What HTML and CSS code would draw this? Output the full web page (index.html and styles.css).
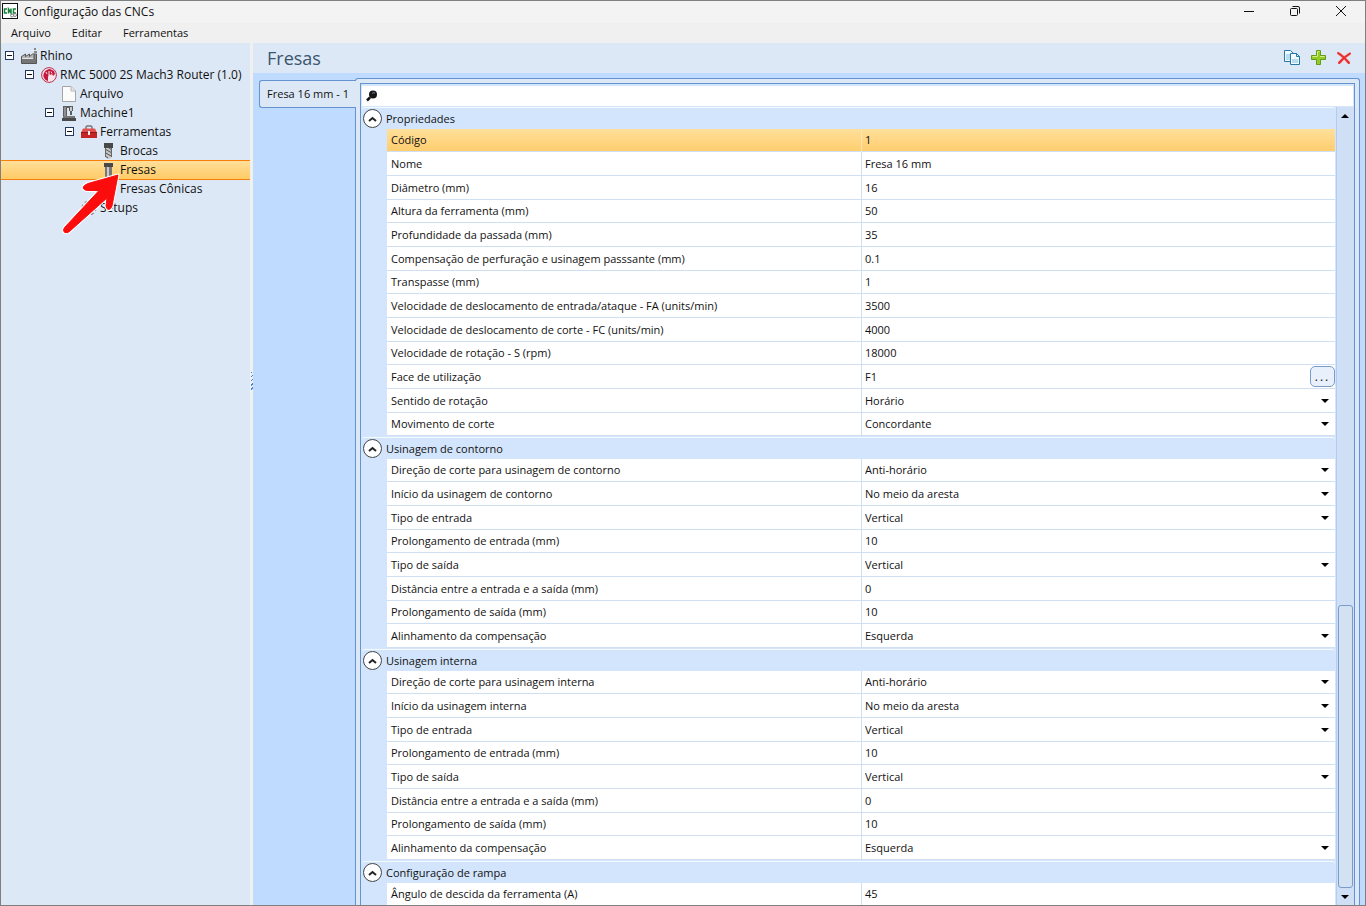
FILE: index.html
```html
<!DOCTYPE html>
<html lang="pt-BR">
	<head>
		<meta charset="UTF-8" />
		<meta name="viewport" content="width=device-width, initial-scale=1.0" />
		<title>Configuração das CNCs</title>
		<link rel="stylesheet" href="styles.css">
	</head>
	<body>
		<div class="window">
			<header class="titlebar">
				<svg class="app-icon" width="16" height="16" viewBox="0 0 16 16">
					<rect x="0.5" y="0.5" width="15" height="15" fill="#fff" stroke="#111" />
					<path d="M5 6H2.500v4H5M6.500 10.500V6l2.500 4V5.500M14 6h-2.500v4H14" fill="none" stroke="#15803a" stroke-width="1.500" />
					<circle cx="10" cy="12.500" r="1.500" fill="none" stroke="#888" />
					<circle cx="13" cy="12" r="1.500" fill="none" stroke="#888" />
				</svg>
				<h1 class="window-title">Configuração das CNCs</h1>
				<div class="window-buttons">
					<button type="button" aria-label="Minimizar">
						<svg width="12" height="12" viewBox="0 0 12 12"><path d="M1 6.500h10" /></svg>
					</button>
					<button type="button" aria-label="Restaurar">
						<svg width="12" height="12" viewBox="0 0 12 12">
							<rect x="1.500" y="3.500" width="7" height="7" rx="1" />
							<path d="M3.500 1.500H9a1.500 1.500 0 0 1 1.500 1.500v5.500" />
						</svg>
					</button>
					<button type="button" aria-label="Fechar">
						<svg width="12" height="12" viewBox="0 0 12 12"><path d="M1 1l10 10M11 1L1 11" /></svg>
					</button>
				</div>
			</header>

			<nav class="menubar">
				<button type="button">Arquivo</button>
				<button type="button">Editar</button>
				<button type="button">Ferramentas</button>
			</nav>

			<div class="workspace">
				<aside class="sidebar">
					<ul class="tree">
						<li class="node">
							<button type="button" class="expander" aria-label="Recolher Rhino"></button>
							<svg class="icon" viewBox="0 0 16 16">
								<path d="M13 0h2v2h-2zM13 3h3v2h-3z" fill="#888" />
								<path d="M0.500 15.500V8.500l4-2.500v2.500l4-2.500v2.500l3-2.500h4v9.500z" fill="#b5b5b5" stroke="#555" />
								<path d="M1 11h14v4H1z" fill="#757575" />
								<path d="M13.500 6v5" stroke="#666" stroke-width="2" />
								<path d="M1 10.500h11" stroke="#e4e4e4" />
							</svg>
							<span>Rhino</span>
						</li>
						<li class="node level-1">
							<button type="button" class="expander" aria-label="Recolher RMC 5000"></button>
							<svg class="icon" viewBox="0 0 16 16">
								<circle cx="8" cy="8" r="7.400" fill="#f6e4ea" stroke="#b8304f" />
								<path d="M7 14C3 13 1.500 9 3 6 4.500 3 7 2 9 2l4 2 1 3-2 2-1-2-2 1-1-1-1 3z" fill="#c4183c" />
								<path d="M8 4v4M10 4.500l1 2M5 5l1 2" stroke="#f6e4ea" />
							</svg>
							<span>RMC 5000 2S Mach3 Router (1.0)</span>
						</li>
						<li class="node level-2 leaf">
							<svg class="icon" viewBox="0 0 16 16">
								<path d="M1.500 0.500H10L14.500 5v10.500h-13z" fill="#fbfbfb" stroke="#a5a5a5" />
								<path d="M10 0.500V5h4.500" fill="#e8e8e8" stroke="#b5b5b5" />
							</svg>
							<span>Arquivo</span>
						</li>
						<li class="node level-2">
							<button type="button" class="expander" aria-label="Recolher Machine1"></button>
							<svg class="icon" viewBox="0 0 16 16">
								<path d="M2 12V1h10v5h-1v4H9V6H8V3H6v9z" fill="#5e5e5e" />
								<path d="M3 2h2v9H3z" fill="#909090" />
								<path d="M9 2h2v4H9z" fill="#c8c8c8" />
								<path d="M2 11h12v2H2z" fill="#777" />
								<path d="M1 13h14v3H1z" fill="#4a4a4a" />
							</svg>
							<span>Machine1</span>
						</li>
						<li class="node level-3">
							<button type="button" class="expander" aria-label="Recolher Ferramentas"></button>
							<svg class="icon" viewBox="0 0 16 16">
								<path d="M5 5V3l1-1h4l1 1v2" fill="none" stroke="#777" stroke-width="1.500" />
								<path d="M2 4.500h12l2 4.500H0z" fill="#e25050" />
								<path d="M0 8h16v6H0z" fill="#c42424" />
								<path d="M0 8.500h16" stroke="#8c1818" />
								<path d="M7 7h2v4H7z" fill="#eee" />
							</svg>
							<span>Ferramentas</span>
						</li>
						<li class="node level-4 leaf">
							<svg class="icon" viewBox="0 0 16 16">
								<path d="M3 0h9v5H3z" fill="#484848" />
								<path d="M4 5h7v9l-3 2-3-1-1-2z" fill="#c4c4c4" />
								<path d="M4 6l7 4M4 9.500l7 4M4 13l3 2M8 5l3 2" stroke="#555" />
								<path d="M4.500 5v9M10.500 5v9" stroke="#666" />
							</svg>
							<span>Brocas</span>
						</li>
						<li class="node level-4 leaf selected">
							<svg class="icon" viewBox="0 0 16 16">
								<path d="M3 1h9v4H3z" fill="#484848" />
								<path d="M4 5h7v11H4z" fill="#777" />
								<path d="M6 5h2v11H6z" fill="#ccc" />
							</svg>
							<span>Fresas</span>
						</li>
						<li class="node level-4 leaf">
							<svg class="icon" viewBox="0 0 16 16">
								<path d="M3 0h9v4H3z" fill="#484848" />
								<path d="M6 4h3l4 11H2z" fill="#888" />
								<path d="M11 13l3 2h-3z" fill="#333" />
							</svg>
							<span>Fresas Cônicas</span>
						</li>
						<li class="node level-3 leaf">
							<svg class="icon" viewBox="0 0 16 16">
								<circle cx="8" cy="8" r="6" fill="none" stroke="#8f8f8f" stroke-width="3" stroke-dasharray="2.800 1.900" />
								<circle cx="8" cy="8" r="4" fill="#dde8f6" stroke="#a8a8a8" stroke-width="3" />
								<circle cx="8" cy="8" r="2.500" fill="#dde8f6" stroke="#777" />
							</svg>
							<span>Setups</span>
						</li>
					</ul>
					<!-- pointer over the selected node -->
					<svg class="pointer" width="60" height="64" viewBox="0 0 60 64">
						<path d="M57 4L27 12.500Q22 14.500 22 17 23 19.500 27 19.500L38 19.500 4 56Q1 60 4 61.500 7 62.500 9 60L46 27 45 35Q46 39 48 38.500 50 38 51 35z" fill="#fb0d0d" stroke="#fff" stroke-width="3" stroke-linejoin="round" />
						<path d="M57 4L27 12.500Q22 14.500 22 17 23 19.500 27 19.500L38 19.500 4 56Q1 60 4 61.500 7 62.500 9 60L46 27 45 35Q46 39 48 38.500 50 38 51 35z" fill="#fb0d0d" stroke="#fb0d0d" stroke-linejoin="round" />
					</svg>
				</aside>

				<div class="splitter"><span class="grip"></span></div>

				<main class="main">
					<div class="main-header">
						<h2 class="main-title">Fresas</h2>
						<button type="button" aria-label="Copiar">
							<svg width="18" height="18" viewBox="0 0 18 18">
								<path d="M1.500 1.500h6l3 3v8h-9z" fill="#f4fbff" stroke="#2479a8" />
								<path d="M3 5h5v6H3z" fill="#b8dced" />
								<path d="M7.500 4.500h6l3 3v8h-9z" fill="#f4fbff" stroke="#2479a8" />
								<path d="M9 10h6v4H9z" fill="#b8dced" />
								<path d="M13.500 4.500v3h3" fill="none" stroke="#2479a8" />
							</svg>
						</button>
						<button type="button" aria-label="Adicionar">
							<svg width="18" height="18" viewBox="0 0 18 18">
								<path d="M7.500 1.500h4v5h5v4h-5v5h-4v-5h-5v-4h5z" fill="#93cc22" stroke="#65991a" />
								<path d="M8.500 7V2.500h2M3.500 7.500h5M11 7.500h4.500" fill="none" stroke="#d2ed86" />
							</svg>
						</button>
						<button type="button" aria-label="Excluir">
							<svg width="18" height="18" viewBox="0 0 18 18">
								<path d="M3 4q5 3 11 10M15 4.500Q9 8 4 14" fill="none" stroke="#f5a0a0" stroke-width="3" />
								<path d="M3 4q5 3 11 10M15 4.500Q9 8 4 14" fill="none" stroke="#e92b2b" stroke-width="2" stroke-linecap="round" />
							</svg>
						</button>
					</div>

					<div class="tabs">
						<div class="tab-list">
							<button type="button" class="tab">Fresa 16 mm - 1</button>
						</div>
						<div class="tab-page">
							<div class="property-panel">
								<div class="search">
									<svg width="12" height="12" viewBox="0 0 12 12">
										<circle cx="7" cy="4.500" r="4" fill="#151515" />
										<path d="M4 7.500L1 10.500" stroke="#111" stroke-width="2.500" />
										<path d="M6 3.500Q7 2 9 3" fill="none" stroke="#6b8db8" />
									</svg>
									<input type="text" aria-label="Pesquisar propriedades">
								</div>

								<div class="grid-area">
									<div class="groups">
										<section class="group">
											<h3 class="group-title"><button type="button" class="collapse" aria-label="Recolher"><svg width="11" height="8" viewBox="0 0 11 8"><path d="M2 6l3.500-3L9 6" /></svg></button>Propriedades</h3>
											<table class="properties">
												<tr class="active"><th><label for="codigo">Código</label></th><td><input id="codigo" type="text" value="1"></td></tr>
												<tr><th><label for="nome">Nome</label></th><td><input id="nome" type="text" value="Fresa 16 mm"></td></tr>
												<tr><th><label for="diametro">Diâmetro (mm)</label></th><td><input id="diametro" type="text" value="16"></td></tr>
												<tr><th><label for="altura">Altura da ferramenta (mm)</label></th><td><input id="altura" type="text" value="50"></td></tr>
												<tr><th><label for="passada">Profundidade da passada (mm)</label></th><td><input id="passada" type="text" value="35"></td></tr>
												<tr><th><label for="perfuracao">Compensação de perfuração e usinagem passsante (mm)</label></th><td><input id="perfuracao" type="text" value="0.1"></td></tr>
												<tr><th><label for="transpasse">Transpasse (mm)</label></th><td><input id="transpasse" type="text" value="1"></td></tr>
												<tr><th><label for="fa">Velocidade de deslocamento de entrada/ataque - FA (units/min)</label></th><td><input id="fa" type="text" value="3500"></td></tr>
												<tr><th><label for="fc">Velocidade de deslocamento de corte - FC (units/min)</label></th><td><input id="fc" type="text" value="4000"></td></tr>
												<tr><th><label for="rpm">Velocidade de rotação - S (rpm)</label></th><td><input id="rpm" type="text" value="18000"></td></tr>
												<tr><th><label for="face">Face de utilização</label></th><td><div class="with-button"><input id="face" type="text" value="F1"><button type="button" class="more">...</button></div></td></tr>
												<tr><th><label for="rotacao">Sentido de rotação</label></th><td><div class="dropdown"><select id="rotacao"><option>Horário</option></select></div></td></tr>
												<tr><th><label for="movimento">Movimento de corte</label></th><td><div class="dropdown"><select id="movimento"><option>Concordante</option></select></div></td></tr>
											</table>
										</section>

										<section class="group">
											<h3 class="group-title"><button type="button" class="collapse" aria-label="Recolher"><svg width="11" height="8" viewBox="0 0 11 8"><path d="M2 6l3.500-3L9 6" /></svg></button>Usinagem de contorno</h3>
											<table class="properties">
												<tr><th><label for="c-direcao">Direção de corte para usinagem de contorno</label></th><td><div class="dropdown"><select id="c-direcao"><option>Anti-horário</option></select></div></td></tr>
												<tr><th><label for="c-inicio">Início da usinagem de contorno</label></th><td><div class="dropdown"><select id="c-inicio"><option>No meio da aresta</option></select></div></td></tr>
												<tr><th><label for="c-entrada">Tipo de entrada</label></th><td><div class="dropdown"><select id="c-entrada"><option>Vertical</option></select></div></td></tr>
												<tr><th><label for="c-prol-entrada">Prolongamento de entrada (mm)</label></th><td><input id="c-prol-entrada" type="text" value="10"></td></tr>
												<tr><th><label for="c-saida">Tipo de saída</label></th><td><div class="dropdown"><select id="c-saida"><option>Vertical</option></select></div></td></tr>
												<tr><th><label for="c-distancia">Distância entre a entrada e a saída (mm)</label></th><td><input id="c-distancia" type="text" value="0"></td></tr>
												<tr><th><label for="c-prol-saida">Prolongamento de saída (mm)</label></th><td><input id="c-prol-saida" type="text" value="10"></td></tr>
												<tr><th><label for="c-alinhamento">Alinhamento da compensação</label></th><td><div class="dropdown"><select id="c-alinhamento"><option>Esquerda</option></select></div></td></tr>
											</table>
										</section>

										<section class="group">
											<h3 class="group-title"><button type="button" class="collapse" aria-label="Recolher"><svg width="11" height="8" viewBox="0 0 11 8"><path d="M2 6l3.500-3L9 6" /></svg></button>Usinagem interna</h3>
											<table class="properties">
												<tr><th><label for="i-direcao">Direção de corte para usinagem interna</label></th><td><div class="dropdown"><select id="i-direcao"><option>Anti-horário</option></select></div></td></tr>
												<tr><th><label for="i-inicio">Início da usinagem interna</label></th><td><div class="dropdown"><select id="i-inicio"><option>No meio da aresta</option></select></div></td></tr>
												<tr><th><label for="i-entrada">Tipo de entrada</label></th><td><div class="dropdown"><select id="i-entrada"><option>Vertical</option></select></div></td></tr>
												<tr><th><label for="i-prol-entrada">Prolongamento de entrada (mm)</label></th><td><input id="i-prol-entrada" type="text" value="10"></td></tr>
												<tr><th><label for="i-saida">Tipo de saída</label></th><td><div class="dropdown"><select id="i-saida"><option>Vertical</option></select></div></td></tr>
												<tr><th><label for="i-distancia">Distância entre a entrada e a saída (mm)</label></th><td><input id="i-distancia" type="text" value="0"></td></tr>
												<tr><th><label for="i-prol-saida">Prolongamento de saída (mm)</label></th><td><input id="i-prol-saida" type="text" value="10"></td></tr>
												<tr><th><label for="i-alinhamento">Alinhamento da compensação</label></th><td><div class="dropdown"><select id="i-alinhamento"><option>Esquerda</option></select></div></td></tr>
											</table>
										</section>

										<section class="group">
											<h3 class="group-title"><button type="button" class="collapse" aria-label="Recolher"><svg width="11" height="8" viewBox="0 0 11 8"><path d="M2 6l3.500-3L9 6" /></svg></button>Configuração de rampa</h3>
											<table class="properties">
												<tr><th><label for="angulo">Ângulo de descida da ferramenta (A)</label></th><td><input id="angulo" type="text" value="45"></td></tr>
											</table>
										</section>
									</div>

									<div class="scrollbar">
										<button type="button" class="scroll-up" aria-label="Rolar para cima"></button>
										<div class="scroll-track"><div class="scroll-thumb"></div></div>
										<button type="button" class="scroll-down" aria-label="Rolar para baixo"></button>
									</div>
								</div>
							</div>
						</div>
					</div>
				</main>
			</div>
		</div>
	</body>
</html>
```

FILE: styles.css
```css
* {
	box-sizing: border-box;
}

body {
	margin: 0;
	font-family: "Open Sans", "Noto Sans", sans-serif;
	font-size: 12px;
	color: #111;
}

button,
input,
select {
	margin: 0;
	padding: 0;
	border: none;
	background: none;
	font: inherit;
	color: inherit;
}

h1,
h2,
h3 {
	margin: 0;
	font-weight: 400;
}

.window {
	display: flex;
	flex-direction: column;
	height: 100vh;
	border: 1px solid #7f7f7f;
	background: #f0f0f0;
	overflow: hidden;
}

/* title bar and menu */
.titlebar {
	display: flex;
	align-items: center;
	flex: none;
	height: 22px;
	padding: 0 1px 2px;
	background: #f3f3f3;
}

.window-title {
	margin-left: 6px;
	font-size: 12px;
}

.window-buttons {
	display: flex;
	margin-left: auto;
}

.window-buttons button {
	display: flex;
	align-items: center;
	justify-content: center;
	width: 46px;
	height: 20px;
}

.window-buttons svg {
	fill: none;
	stroke: #111;
}

.menubar {
	display: flex;
	flex: none;
	gap: 21px;
	height: 20px;
	padding: 0 0 2px 10px;
	font-size: 11px;
}

/* tree */
.workspace {
	display: flex;
	flex: 1;
	min-height: 0;
}

.sidebar {
	position: relative;
	flex: none;
	width: 249px;
	background: #dde8f6;
}

.tree {
	margin: 0;
	padding: 3px 0 0;
	list-style: none;
}

.node {
	display: flex;
	align-items: center;
	gap: 3px;
	height: 19px;
	padding-left: 4px;
	white-space: nowrap;
}

.level-1 {
	padding-left: 24px;
}

.level-2 {
	padding-left: 44px;
}

.level-3 {
	padding-left: 64px;
}

.level-4 {
	padding-left: 84px;
}

.leaf::before {
	content: "";
	width: 13px;
}

.node.selected {
	background: linear-gradient(#ffe09c, #ffcb66);
	box-shadow: inset 0 1px #f97d0b, 0 1px #f97d0b;
}

.expander {
	position: relative;
	flex: none;
	width: 9px;
	height: 9px;
	margin-right: 4px;
	border: 1px solid #26365c;
	background: #fff;
}

.expander::after {
	content: "";
	position: absolute;
	top: 3px;
	left: 1px;
	width: 5px;
	height: 1px;
	background: #111;
}

.icon {
	flex: none;
	width: 16px;
	height: 16px;
}

.pointer {
	position: absolute;
	top: 128px;
	left: 60px;
}

.splitter {
	display: flex;
	align-items: center;
	flex: none;
	width: 3px;
	background: #f0f0f0;
}

.grip {
	width: 2px;
	height: 18px;
	margin-bottom: 186px;
	margin-left: 1px;
	background: repeating-linear-gradient(135deg, #4484d0 0 1px, #f0f0f0 1px 3px);
}

/* main area */
.main {
	display: flex;
	flex: 1;
	flex-direction: column;
	min-width: 0;
	background: #bfdbff;
}

.main-header {
	display: flex;
	align-items: center;
	flex: none;
	gap: 8px;
	height: 30px;
	padding: 0 12px 0 14px;
	background: #dde8f6;
}

.main-header svg {
	display: block;
}

.main-title {
	margin-right: auto;
	font-size: 18px;
	color: #3b556f;
}

.tabs {
	display: flex;
	flex: 1;
	min-height: 0;
	padding: 5px 5px 0 6px;
}

.tab-list {
	z-index: 1;
	flex: none;
	padding-top: 2px;
	margin-right: -1px;
}

.tab {
	width: 97px;
	height: 28px;
	padding-bottom: 2px;
	border: 1px solid #6593cf;
	border-right: none;
	border-radius: 3px 0 0 3px;
	background: #dde8f6;
	font-size: 11px;
	white-space: nowrap;
}

.tab-page {
	display: flex;
	flex: 1;
	min-width: 0;
	padding: 4px 4px 0;
	border: 1px solid #6593cf;
	border-bottom: none;
	border-radius: 3px 3px 0 0;
	background: #dde8f6;
}

.property-panel {
	display: flex;
	flex: 1;
	flex-direction: column;
	min-width: 0;
	border: 1px solid #6593cf;
	border-bottom: none;
	background: #d5e5fa;
}

.search {
	display: flex;
	align-items: center;
	flex: none;
	gap: 6px;
	height: 20px;
	margin: 2px 1px 1px;
	padding-left: 4px;
	background: #fff;
}

.search input {
	flex: 1;
	outline: none;
}

.grid-area {
	display: flex;
	flex: 1;
	min-height: 0;
}

.groups {
	flex: 1;
	min-width: 0;
	padding-left: 1px;
	overflow: hidden;
	font-size: 11px;
}

.group {
	margin-bottom: 1px;
	padding-left: 25px;
	border-radius: 3px;
	background: #d3e5fc;
}

.group-title {
	display: flex;
	align-items: center;
	gap: 4px;
	height: 22px;
	margin-left: -25px;
	padding-left: 1px;
	border-top: 1px solid #f4f9ff;
	border-radius: 3px;
	font-size: 11px;
}

.collapse {
	display: flex;
	align-items: center;
	justify-content: center;
	width: 19px;
	height: 19px;
	border: 1px solid #444;
	border-radius: 50%;
	background: #fff;
}

.collapse svg {
	flex: none;
}

.collapse path {
	fill: none;
	stroke: #222;
	stroke-width: 2;
}

.properties {
	width: 100%;
	table-layout: fixed;
	border-spacing: 0;
	background: #fff;
}

.properties tr {
	height: 24px;
}

.properties tr:nth-child(3n + 1) {
	height: 23px;
}

.properties th,
.properties td {
	padding: 0 0 0 4px;
	border-bottom: 1px solid #d0dff2;
	font-weight: 400;
	line-height: 16px;
	text-align: left;
	white-space: nowrap;
}

.properties td {
	padding-left: 3px;
	border-left: 1px solid #d0dff2;
}

.properties .active {
	background: linear-gradient(#ffdf9b, #ffcd6c);
}

.properties .active td {
	border-left-color: #ffe5b0;
}

.properties input,
.properties select {
	display: block;
	width: 100%;
	height: 16px;
	line-height: 16px;
	appearance: none;
}

.with-button {
	display: flex;
	align-items: center;
}

.more {
	flex: none;
	width: 25px;
	height: 21px;
	border: 1px solid #7b9bc8;
	border-radius: 5px;
	background: #e8f0fb;
	font-size: 12px;
	line-height: 16px;
	letter-spacing: 2px;
}

.dropdown {
	display: flex;
	align-items: center;
	padding-right: 6px;
}

.dropdown::after,
.scroll-up::before,
.scroll-down::before {
	content: "";
	flex: none;
	border: 4px solid transparent;
	border-top-color: #000;
	border-bottom: none;
}

.scroll-up::before {
	border-top: none;
	border-bottom: 4px solid #000;
}

/* scroll bar */
.scrollbar {
	display: flex;
	flex: none;
	flex-direction: column;
	width: 18px;
	margin-left: 1px;
	padding-right: 1px;
	border-left: 1px solid #b3cdf0;
	background: #cfdff5;
}

.scroll-up,
.scroll-down {
	display: flex;
	align-items: center;
	justify-content: center;
	flex: none;
	height: 17px;
}

.scroll-track {
	display: flex;
	flex: 1;
	align-items: flex-end;
	padding-left: 1px;
}

.scroll-thumb {
	width: 100%;
	height: 37%;
	border: 1px solid #7b9bc8;
	border-radius: 3px;
	background: #d3e2f2;
}
```
